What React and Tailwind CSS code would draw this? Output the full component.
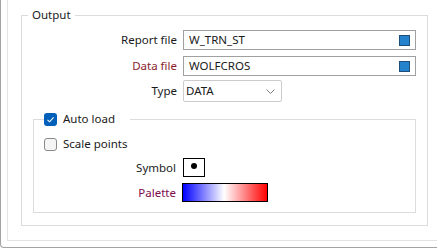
import React from 'react';

function BrowseSquare() {
    return <span className="w-[11px] h-[11px] bg-[#2483cc] border border-[#1d4f7a] shrink-0" />;
}

function Checkbox({ checked }) {
    if (checked) {
        return (
            <span className="w-[13px] h-[13px] rounded-[3px] bg-[#005fb8] flex items-center justify-center shrink-0">
                <svg width="9" height="9" viewBox="0 0 9 9">
                    <path d="M1.5 4.8 L3.6 6.8 L7.6 2.4" fill="none" stroke="#fff" strokeWidth="1.1" />
                </svg>
            </span>
        );
    }
    return <span className="w-[13px] h-[13px] rounded-[3px] border border-[#8a8a8a] bg-[#f5f5f5] shrink-0" />;
}

export default function App() {
    return (
        <div className="w-[437px] h-[249px] bg-white overflow-hidden text-[11.5px] leading-[16px] text-[#1a1a1a]" style={{ fontFamily: '"Noto Sans", "Liberation Sans", sans-serif' }}>
            <div className="w-[460px] h-[248px] border-l border-b border-[#a3a3a3] rounded-bl-[4px]">
                <div className="ml-[6px] h-[241px] border-l border-b border-[#e3e3e3] pl-[13px] pt-[7px]">
                    <fieldset className="w-[407px] border border-[#dcdcdc] pr-[11px] pb-[12px]">
                        <legend className="ml-[6px] px-[4px]">Output</legend>

                        {/* File rows */}
                        <div className="grid grid-cols-[155px_1fr] gap-x-[6px] items-center pt-[7px]">
                            <span className="text-right">Report file</span>
                            <div className="h-[20px] border border-[#a0a0a0] flex items-center justify-between pl-[5px] pr-[5px]">
                                <span>W_TRN_ST</span>
                                <BrowseSquare />
                            </div>
                            <span className="text-right text-[#8b1c2c] mt-[6px]">Data file</span>
                            <div className="h-[20px] mt-[6px] border border-[#a0a0a0] flex items-center justify-between pl-[5px] pr-[5px]">
                                <span>WOLFCROS</span>
                                <BrowseSquare />
                            </div>
                            <span className="text-right mt-[4px]">Type</span>
                            <div className="w-[99px] h-[22px] mt-[4px] border border-[#cccccc] rounded-[2px] flex items-center justify-between pl-[2px] pr-[6px]">
                                <span>DATA</span>
                                <svg width="9" height="5" viewBox="0 0 9 5">
                                    <path d="M0.5 0.5 L4.5 4.5 L8.5 0.5" fill="none" stroke="#7a7a7a" strokeWidth="1" />
                                </svg>
                            </div>
                        </div>

                        {/* Auto load group */}
                        <fieldset className="ml-[11px] mt-[9px] border border-[#dcdcdc] pb-[10px]">
                            <legend className="ml-[10px] pr-[15px] flex items-center gap-[6px] h-[16px]">
                                <Checkbox checked />
                                <span>Auto load</span>
                            </legend>
                            <div className="flex items-center gap-[6px] h-[16px] mt-[9px] pl-[10px]">
                                <Checkbox />
                                <span>Scale points</span>
                            </div>
                            <div className="grid grid-cols-[142px_1fr] gap-x-[7px] items-center mt-[6px]">
                                <span className="text-right">Symbol</span>
                                <div className="w-[22px] h-[19px] border border-black flex items-center justify-center">
                                    <span className="w-[6px] h-[6px] rounded-full bg-black -mt-[3px] -ml-[1px]" />
                                </div>
                                <span className="text-right text-[#7d0a4c] mt-[6px]">Palette</span>
                                <div className="w-[86px] h-[19px] mt-[6px] -ml-[1px] border border-black bg-[linear-gradient(to_right,#0000ff,#ffffff_49%,#ff0000)]" />
                            </div>
                        </fieldset>
                    </fieldset>
                </div>
            </div>
        </div>
    );
}
